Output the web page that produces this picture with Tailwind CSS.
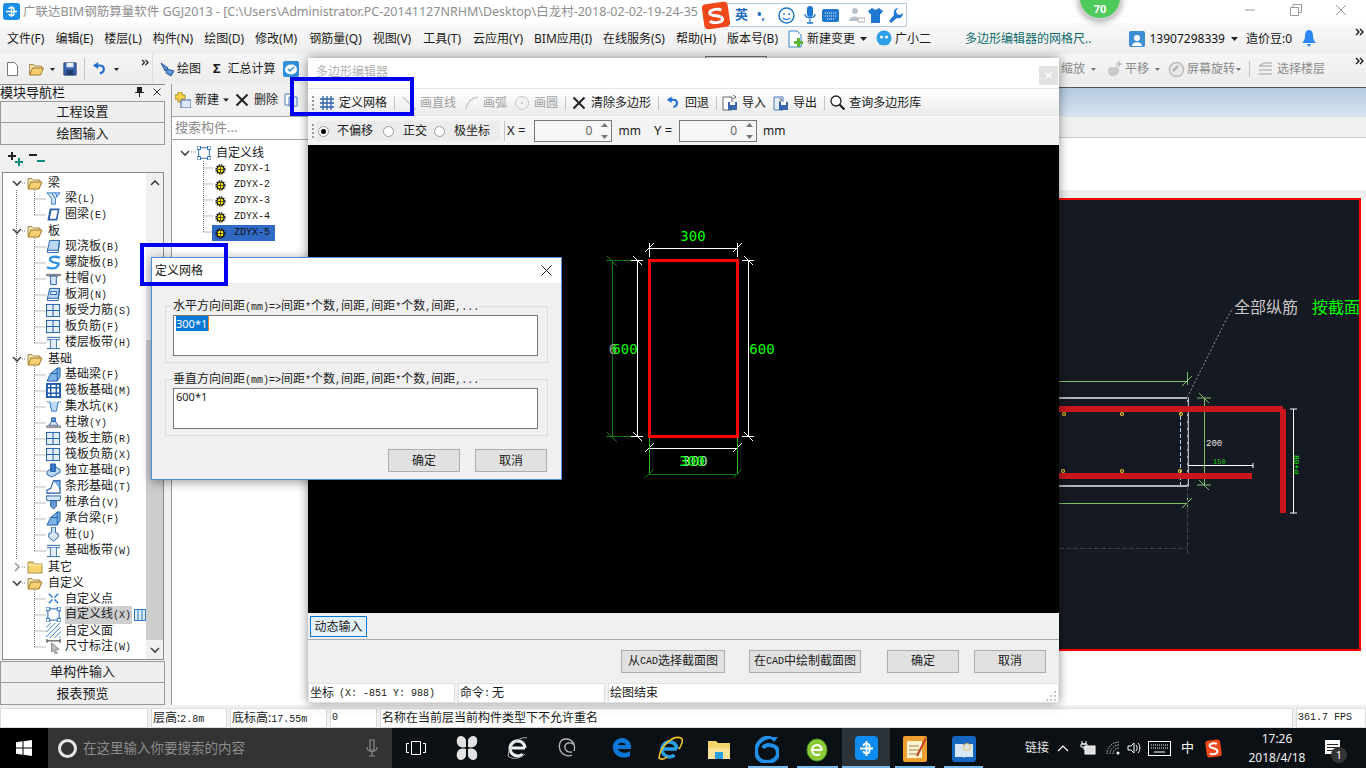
<!DOCTYPE html>
<html lang="zh">
<head>
<meta charset="UTF-8">
<title>广联达BIM钢筋算量软件 GGJ2013</title>
<script src="https://cdn.jsdelivr.net/npm/@tailwindcss/browser@4"></script>
</head>
<body class="bg-[#f0f0f0] text-[#1a1a1a] text-[12px] font-['Noto_Sans','Noto_Sans_CJK_SC',sans-serif]">

<!-- icon set -->
<svg class="absolute w-0 h-0">
  <symbol id="i-beam" viewBox="0 0 16 16"><path d="M1 2h14L10 8v6H6V8z" fill="#d7e8f8" stroke="#2a78c8"/><path d="M6 2l4 6M10 2l2 4" stroke="#2a78c8" fill="none"/></symbol>
  <symbol id="i-ring" viewBox="0 0 16 16"><path d="M4 1.500h10.500L12 14.500H1.500z" fill="#2b62ad"/><path d="M6 3.500h6.500L10.500 12.500H4z" fill="#fff"/></symbol>
  <symbol id="i-slab" viewBox="0 0 16 16"><path d="M4 1.500h10.500L13 12H1.500z" fill="#bcd8f4" stroke="#1d5aa8"/><path d="M1.500 12v2.500H13l1.500-13" fill="none" stroke="#1d5aa8"/></symbol>
  <symbol id="i-spiral" viewBox="0 0 16 16"><path d="M15 3C7 0 1 4 6 7s9 0 7 4-8 4-12 2" fill="none" stroke="#2e90e6" stroke-width="2.500"/></symbol>
  <symbol id="i-cap" viewBox="0 0 16 16"><path d="M0 3h16v2.500H0z" fill="#8a8a8a"/><path d="M4 5.500h8L11 8v6.500H5V8z" fill="#d7e8f8" stroke="#1d5aa8"/></symbol>
  <symbol id="i-hole" viewBox="0 0 16 16"><path d="M4 1.500h10.500L13 12H1.500z" fill="#bcd8f4" stroke="#1d5aa8"/><path d="M1.500 12v2.500H13l1.500-13" fill="none" stroke="#1d5aa8"/><rect x="5" y="5" width="6" height="3" fill="#fff" stroke="#1d5aa8"/></symbol>
  <symbol id="i-cross" viewBox="0 0 16 16"><rect x=".5" y="1.500" width="14" height="13" fill="#e3eefa" stroke="#1d5aa8"/><path d="M7.500 2v12M1 8h13" stroke="#1d5aa8"/></symbol>
  <symbol id="i-band" viewBox="0 0 16 16"><path d="M1 2.500h14M1 5h14M1 14.500h14" stroke="#1d5aa8"/><path d="M5 5v9M11 5v9" stroke="#1d5aa8"/><path d="M5.500 5h5v9h-5z" fill="#e3eefa"/></symbol>
  <symbol id="i-fbeam" viewBox="0 0 16 16"><path d="M1 15l4-8 7-6h3v9l-3 5z" fill="#7fb2e6" stroke="#1d5aa8"/><path d="M5 7h7v8M12 1v6" stroke="#1d5aa8" fill="none"/></symbol>
  <symbol id="i-raft" viewBox="0 0 16 16"><rect x="1" y="1" width="14" height="14" fill="#fff" stroke="#1d5aa8" stroke-width="2"/><path d="M5 1v14M11 1v14M1 5h14M1 11h14" stroke="#1d5aa8" stroke-width="1.500"/></symbol>
  <symbol id="i-pit" viewBox="0 0 16 16"><path d="M1 3h3l2 7h5l2-7h3" fill="none" stroke="#2a78c8" stroke-dasharray="2 1"/><path d="M4 3l2 10h5l2-10" fill="#bcd8f4" stroke="#2a78c8"/></symbol>
  <symbol id="i-pier" viewBox="0 0 16 16"><path d="M6 3h4v4H6z" fill="#6a9ad6" stroke="#1d5aa8"/><path d="M3 11l3-4h4l3 4z" fill="#d7e8f8" stroke="#1d5aa8"/><path d="M0 11h16v3H0z" fill="#9a9a9a"/></symbol>
  <symbol id="i-foot" viewBox="0 0 16 16"><path d="M1 9l9-5 5 3v3l-9 5-5-3z" fill="#bcd8f4" stroke="#1d5aa8"/><path d="M5 1h5v8H5z" fill="#3f78c4" stroke="#1d5aa8"/></symbol>
  <symbol id="i-strip" viewBox="0 0 16 16"><path d="M1 15v-3l4-2 3-8h5l2 9v4z" fill="#fff" stroke="#1d5aa8" stroke-width="1.200"/><path d="M8 2h5l2-1v10" fill="#7fb2e6" stroke="#1d5aa8"/></symbol>
  <symbol id="i-pilecap" viewBox="0 0 16 16"><path d="M0 1h16l-1 5H1z" fill="#d7e8f8" stroke="#1d5aa8"/><path d="M5 6h6v6l-3 3-3-3z" fill="#6a9ad6" stroke="#1d5aa8"/></symbol>
  <symbol id="i-pile" viewBox="0 0 16 16"><path d="M6 0h4v6l3 1v4l-5 4-5-4V7l3-1z" fill="#d7e8f8" stroke="#1d5aa8"/></symbol>
  <symbol id="i-point" viewBox="0 0 16 16"><path d="M3 3l10 10M13 3L3 13" stroke="#2a78c8" stroke-width="1.500"/><circle cx="8" cy="8" r="1.500" fill="#fff"/></symbol>
  <symbol id="i-line" viewBox="0 0 16 16"><rect x="2" y="2" width="12" height="12" fill="#fff" stroke="#1d5aa8"/><path d="M0 0h4v4H0zM12 0h4v4h-4zM0 12h4v4H0zM12 12h4v4h-4z" fill="#fff" stroke="#1668c8"/></symbol>
  <symbol id="i-face" viewBox="0 0 16 16"><path d="M0 5L5 0M0 10L10 0M0 15L15 0M4 16L16 4M9 16l7-7M14 16l2-2" stroke="#2a78c8"/></symbol>
  <symbol id="i-dim" viewBox="0 0 16 16"><path d="M1 0v4M15 0v4M1 2h14" stroke="#222"/><path d="M6 4l8 7-4 .5 2 4-2 .5-2-4-2 2z" fill="#bdbdbd" stroke="#888"/></symbol>
  <symbol id="i-gear" viewBox="0 0 16 16"><circle cx="8" cy="8" r="5" fill="#ffef00" stroke="#111" stroke-width="1.500"/><circle cx="8" cy="8" r="6.500" fill="none" stroke="#111" stroke-width="2" stroke-dasharray="2 1.400"/><path d="M4 8h8M8 4v8" stroke="#111"/></symbol>
  <symbol id="i-open" viewBox="0 0 16 14"><path d="M1 12V2.500h4l1.500 1.500H13v2" fill="#f3e2b0" stroke="#a88a4a"/><path d="M1 13l3-7h11l-3 7z" fill="#f5cf70" stroke="#a07a2a"/></symbol>
  <symbol id="i-closed" viewBox="0 0 16 14"><path d="M1 13V2h5l1 2h8v9z" fill="#f7d56a" stroke="#a88a4a"/><path d="M1 5h14" stroke="#fff3c0"/></symbol>
  <symbol id="i-down" viewBox="0 0 12 12"><path d="M2 4l4 4 4-4" fill="none" stroke="#444" stroke-width="1.600"/></symbol>
  <symbol id="i-right" viewBox="0 0 12 12"><path d="M4 2l4 4-4 4" fill="none" stroke="#999" stroke-width="1.600"/></symbol>
  <symbol id="i-x" viewBox="0 0 14 14"><path d="M1.500 1.500l11 11M12.500 1.500l-11 11" stroke="#222" stroke-width="2"/></symbol>
  <symbol id="i-undo" viewBox="0 0 16 16"><path d="M5 4h4c6 0 6 8 0 9" fill="none" stroke="#1f6fd0" stroke-width="2.500"/><path d="M7 0v8L1 4z" fill="#1f6fd0"/></symbol>
  <symbol id="i-floppy" viewBox="0 0 16 16"><path d="M1 1h14v14H1z" fill="#3a66b0" stroke="#223c70"/><path d="M4 1h8v5H4z" fill="#e8eef8"/><path d="M4 9h8v6H4z" fill="#223c70"/></symbol>
  <symbol id="i-arrow" viewBox="0 0 7 4"><path d="M0 0h7L3.500 4z" fill="#222"/></symbol>
  <symbol id="i-more" viewBox="0 0 9 8"><path d="M1 1l3 3-3 3M5 1l3 3-3 3" fill="none" stroke="#111" stroke-width="1.300"/></symbol>
</svg>

<div class="relative w-[1366px] h-[768px] overflow-hidden flex flex-col">

  <!-- title bar -->
  <div class="h-[23px] bg-white flex items-center shrink-0">
    <div class="ml-[3px] w-[17px] h-[17px] rounded-[3px] bg-[#1a8fe8] flex items-center justify-center">
      <svg class="w-[13px] h-[13px]" viewBox="0 0 13 13"><path d="M6.500 1v11M1 6.500h11M4 4c0-2 5-2 5 0v5c0 2-5 2-5 0" fill="none" stroke="#fff" stroke-width="1.400"/></svg>
    </div>
    <span class="ml-[3px] text-[12.500px] leading-[23px] text-[#8e8e8e] whitespace-nowrap">广联达BIM钢筋算量软件 GGJ2013 - [C:\Users\Administrator.PC-20141127NRHM\Desktop\白龙村-2018-02-02-19-24-35</span>
    <svg class="absolute left-[1244px] top-[4px] w-[12px] h-[12px]" viewBox="0 0 12 12"><path d="M1 6h10" stroke="#999"/></svg>
    <svg class="absolute left-[1290px] top-[4px] w-[12px] h-[12px]" viewBox="0 0 12 12"><path d="M.5 3.500h8v8h-8zM3 3.500V.5h8.500v8H8.500" fill="none" stroke="#999"/></svg>
    <svg class="absolute left-[1335px] top-[4px] w-[12px] h-[12px]" viewBox="0 0 12 12"><path d="M1 1l10 10M11 1L1 11" stroke="#999"/></svg>
  </div>

  <!-- menu bar -->
  <div class="h-[31px] shrink-0 bg-linear-to-b from-[#fafafa] to-[#ededed] flex items-center pl-[7px] gap-[11px] leading-[31px] whitespace-nowrap">
    <span>文件(F)</span><span>编辑(E)</span><span>楼层(L)</span><span>构件(N)</span><span>绘图(D)</span><span>修改(M)</span><span class="ml-[1px]">钢筋量(Q)</span><span>视图(V)</span><span class="ml-[1px]">工具(T)</span><span class="ml-[1px]">云应用(Y)</span><span>BIM应用(I)</span><span>在线服务(S)</span><span>帮助(H)</span><span>版本号(B)</span>
    <svg class="w-[16px] h-[18px] -ml-[2px] -mr-[7px]" viewBox="0 0 16 18"><path d="M2 1h8l4 4v12H2z" fill="#fff" stroke="#3a87c8"/><path d="M10 8h3v3h3v3h-3v3h-3v-3H7v-3h3z" fill="#5cb531"/></svg>
    <span>新建变更</span>
    <svg class="w-[7px] h-[4px] -ml-[6px]" viewBox="0 0 7 4"><use href="#i-arrow"/></svg>
    <svg class="w-[18px] h-[18px] -ml-[3px] -mr-[9px]" viewBox="0 0 18 18"><circle cx="9" cy="8" r="7.500" fill="#2b9fe8"/><circle cx="6.500" cy="7" r="1.500" fill="#fff"/><circle cx="11.500" cy="7" r="1.500" fill="#fff"/><path d="M4 15l3-3h4l3 3" fill="#2b9fe8"/></svg>
    <span>广小二</span>
    <span class="ml-[23px] text-[#0b6b6b]">多边形编辑器的网格尺..</span>
    <div class="ml-[27px] w-[16px] h-[16px] rounded-[2px] bg-[#3d8ed6] flex items-end justify-center -mr-[7px]"><svg class="w-[12px] h-[13px]" viewBox="0 0 12 13"><circle cx="6" cy="4" r="3" fill="#fff"/><path d="M1 12c0-5 10-5 10 0z" fill="#fff"/></svg></div>
    <span class="text-[#111]">13907298339</span>
    <svg class="w-[7px] h-[4px] -ml-[5px]" viewBox="0 0 7 4"><use href="#i-arrow"/></svg>
    <span class="text-[#111] -ml-[3px]">造价豆:0</span>
    <svg class="w-[14px] h-[17px] -ml-[1px]" viewBox="0 0 14 17"><path d="M7 0c3 0 4 3 4 6 0 3 1 5 3 7H0c2-2 3-4 3-7 0-3 1-6 4-6zM5 14h4l-2 3z" fill="#2a86f0"/></svg>
    <svg class="absolute left-[1355px] top-[28px] w-[9px] h-[8px]" viewBox="0 0 9 8"><use href="#i-more"/></svg>
  </div>

  <!-- main toolbar -->
  <div class="h-[30px] shrink-0 bg-linear-to-b from-[#f5f5f5] to-[#ececec] flex items-center whitespace-nowrap relative">
    <svg class="ml-[7px] w-[11px] h-[14px]" viewBox="0 0 11 14"><path d="M.5.5h7l3 3v10H.5z" fill="#fff" stroke="#777"/></svg>
    <svg class="ml-[10px] w-[17px] h-[14px]" viewBox="0 0 16 14"><use href="#i-open"/></svg>
    <svg class="ml-[5px] w-[5px] h-[3px]" viewBox="0 0 7 4"><use href="#i-arrow"/></svg>
    <svg class="ml-[8px] w-[14px] h-[14px]" viewBox="0 0 16 16"><use href="#i-floppy"/></svg>
    <div class="ml-[7px] w-[1px] h-[22px] bg-[#c4c4c4]"></div>
    <svg class="ml-[7px] w-[14px] h-[14px]" viewBox="0 0 16 16"><use href="#i-undo"/></svg>
    <svg class="ml-[8px] w-[5px] h-[3px]" viewBox="0 0 7 4"><use href="#i-arrow"/></svg>
    <svg class="ml-[22px] -mt-[14px] w-[8px] h-[7px]" viewBox="0 0 9 8"><use href="#i-more"/></svg>
    <div class="ml-[3px] w-[1px] h-[30px] bg-[#dedede]"></div>
    <svg class="ml-[6px] w-[17px] h-[17px]" viewBox="0 0 17 17"><path d="M2 2l7 5-3 3zM8 8l7 2-3 5-5-3z" fill="#5b94d6" stroke="#2c5c9c"/></svg>
    <span class="ml-[1px]">绘图</span>
    <span class="ml-[12px] font-bold text-[13px]">Σ</span>
    <span class="ml-[7px]">汇总计算</span>
    <svg class="ml-[7px] w-[16px] h-[16px]" viewBox="0 0 16 16"><rect width="16" height="16" rx="2" fill="#2f8fd8"/><ellipse cx="8" cy="8.500" rx="6" ry="5" fill="#fff"/><path d="M5 8l2 2 4-4" fill="none" stroke="#2f8fd8" stroke-width="1.500"/></svg>
    <div class="absolute left-[705px] top-[2px] w-[62px] h-[4px] border border-[#777] border-b-0"></div>
    <div class="absolute left-[1061px] top-0 h-[30px] flex items-center text-[#8a8a8a]">
      <span>缩放</span>
      <svg class="ml-[6px] w-[5px] h-[3px] opacity-60" viewBox="0 0 7 4"><use href="#i-arrow"/></svg>
      <svg class="ml-[10px] w-[16px] h-[16px]" viewBox="0 0 16 16"><path d="M2 10c0-4 4-5 6-3l2-2 3 3c1 4-2 7-6 7-3 0-5-2-5-5z" fill="#c9c9c9"/><path d="M13 0v6M10 3h6" stroke="#aaa"/></svg>
      <span class="ml-[3px]">平移</span>
      <svg class="ml-[6px] w-[5px] h-[3px] opacity-60" viewBox="0 0 7 4"><use href="#i-arrow"/></svg>
      <svg class="ml-[8px] w-[17px] h-[17px]" viewBox="0 0 17 17"><circle cx="8.500" cy="8.500" r="7" fill="#e8e8e8" stroke="#bbb" stroke-width="1.500"/><path d="M5 10l5-5" stroke="#aaa" stroke-width="2"/></svg>
      <span class="ml-[2px]">屏幕旋转</span>
      <svg class="ml-[1px] w-[5px] h-[3px] opacity-60" viewBox="0 0 7 4"><use href="#i-arrow"/></svg>
      <div class="ml-[8px] w-[1px] h-[16px] bg-[#c4c4c4]"></div>
      <svg class="ml-[8px] w-[15px] h-[14px]" viewBox="0 0 15 14"><path d="M1 4l5-3h8M1 4h13M1 8h13M1 12h13" fill="none" stroke="#bbb" stroke-width="1.500"/></svg>
      <span class="ml-[4px]">选择楼层</span>
    </div>
    <svg class="absolute left-[1355px] top-[3px] w-[9px] h-[8px]" viewBox="0 0 9 8"><use href="#i-more"/></svg>
  </div>

  <!-- work area -->
  <div class="h-[621px] shrink-0 flex">
    <!-- module nav -->
    <div class="w-[165px] shrink-0 flex flex-col">
      <div class="h-[14px] border-t border-[#8a8a8a] flex items-center">
        <span class="text-[13px] leading-[14px] text-[#111]">模块导航栏</span>
        <svg class="ml-auto w-[9px] h-[10px]" viewBox="0 0 9 10"><path d="M2 0h5v5h2v1H5v4H4V6H0V5h2z" fill="#222"/></svg>
        <svg class="ml-[9px] mr-[4px] w-[8px] h-[8px]" viewBox="0 0 8 8"><path d="M.5.5l7 7M7.500.5l-7 7" stroke="#333"/></svg>
      </div>
      <div class="mt-[3px] h-[22px] border border-[#9a9a9a] bg-[#efefef] flex items-center justify-center text-[13px]">工程设置</div>
      <div class="h-[22px] border border-t-0 border-[#9a9a9a] bg-[#efefef] flex items-center justify-center text-[13px]">绘图输入</div>
      <div class="h-[27px] flex items-center pl-[7px]">
        <svg class="w-[17px] h-[15px]" viewBox="0 0 17 15"><path d="M1 5h8M5 1v8" stroke="#222" stroke-width="2"/><path d="M8 11h8M12 7v8" stroke="#0c8a78" stroke-width="2"/></svg>
        <svg class="ml-[5px] w-[17px] h-[10px]" viewBox="0 0 17 10"><path d="M0 2h8" stroke="#222" stroke-width="2"/><path d="M8 8h8" stroke="#0c8a78" stroke-width="2"/></svg>
      </div>
      <div class="relative ml-[2px] w-[162px] h-[489px] border border-[#8a8a8a] bg-white overflow-hidden">
        <svg class="absolute left-0 top-[1px] w-[144px] h-[487px]" viewBox="0 0 144 487" fill="none" stroke="#777" stroke-dasharray="1 1">
          <path d="M13.500 16V385M19 9h4M19 57h4M19 185h4M19 393h4M19 409h4"/>
          <path d="M31.500 16V41M31.500 64V169M31.500 192V377M31.500 416V473"/>
          <path d="M31.500 25H43M31.500 41H43M31.500 73H43M31.500 89H43M31.500 105H43M31.500 121H43M31.500 137H43M31.500 153H43M31.500 169H43M31.500 201H43M31.500 217H43M31.500 233H43M31.500 249H43M31.500 265H43M31.500 281H43M31.500 297H43M31.500 313H43M31.500 329H43M31.500 345H43M31.500 361H43M31.500 377H43M31.500 425H43M31.500 441H43M31.500 457H43M31.500 473H43"/>
        </svg>
        <div id="nav-tree" class="relative pt-[2px] w-[143px]"></div>
        <div class="absolute right-0 top-0 w-[17px] h-full bg-[#f0f0f0] flex flex-col items-center">
          <svg class="mt-[4px] w-[12px] h-[12px] rotate-180" viewBox="0 0 12 12"><use href="#i-down"/></svg>
          <div class="mt-[151px] w-full h-[300px] bg-[#cdcdcd]"></div>
          <svg class="mt-[4px] w-[12px] h-[12px]" viewBox="0 0 12 12"><use href="#i-down"/></svg>
        </div>
      </div>
      <div class="mt-[1px] h-[22px] border border-[#9a9a9a] bg-[#efefef] flex items-center justify-center text-[13px]">单构件输入</div>
      <div class="h-[22px] border border-t-0 border-[#9a9a9a] bg-[#efefef] flex items-center justify-center text-[13px]">报表预览</div>
    </div>

    <div class="w-[6px] shrink-0"></div>

    <!-- component list -->
    <div class="w-[140px] shrink-0 flex flex-col border-l border-[#999]">
      <div class="h-[32px] flex items-center pl-[3px] whitespace-nowrap overflow-hidden">
        <svg class="w-[16px] h-[16px]" viewBox="0 0 16 16"><path d="M3 0h4v3h3v4H7v3H3V7H0V3h3z" fill="#f5d44a" stroke="#a88a2a"/><rect x="6" y="8" width="10" height="8" fill="#dce8f6" stroke="#3a66b0"/></svg>
        <span class="ml-[4px]">新建</span>
        <svg class="ml-[4px] w-[6px] h-[4px]" viewBox="0 0 7 4"><use href="#i-arrow"/></svg>
        <svg class="ml-[6px] w-[14px] h-[14px]" viewBox="0 0 14 14"><use href="#i-x"/></svg>
        <span class="ml-[5px]">删除</span>
        <svg class="ml-[6px] w-[14px] h-[14px] shrink-0" viewBox="0 0 14 14"><path d="M1 1h8v11H1z" fill="#fff" stroke="#4a78b8"/><path d="M5 4h8v9H5z" fill="#e3eefa" stroke="#4a78b8"/></svg>
      </div>
      <div class="h-[24px] bg-white border-y border-[#a8a8a8] flex items-center pl-[3px] text-[13px] text-[#8a8a8a]">搜索构件...</div>
      <div class="relative flex-1 bg-white pt-[4px]">
        <svg class="absolute left-0 top-[1px] w-[60px] h-[100px]" viewBox="0 0 60 100" fill="none" stroke="#777" stroke-dasharray="1 1">
          <path d="M31.500 20V91M19 11h5M31.500 27H41M31.500 43H41M31.500 59H41M31.500 75H41M31.500 91H41"/>
        </svg>
        <div id="part-tree" class="relative pt-[1px]"></div>
      </div>
    </div>

    <!-- drawing view behind the editor -->
    <div class="flex-1 flex flex-col min-w-0">
      <div class="h-[3px] bg-[#f0f0f0]"></div>
      <div class="h-[30px] border-t border-[#555] bg-linear-to-b from-[#b5c9df] to-[#d8e5f2]"></div>
      <div class="h-[20px] bg-[#f0f0f0]"></div>
      <div class="h-[53px] bg-white border-t border-[#c8c8c8]"></div>
      <div class="h-[8px] bg-[#eeeeee]"></div>
      <svg class="block w-[1055px] h-[453px] shrink-0" viewBox="311 198 1055 453">
        <rect x="311" y="198" width="1055" height="453" fill="#fff"/>
        <rect x="311" y="199" width="1049" height="451" fill="#151921" stroke="#ff0000" stroke-width="2"/>
        <path d="M1059 381.500H1187M1059 503.500H1187M1204.500 398V485M1197 398h14M1197 485h14" stroke="#7fbf6a"/>
        <path d="M1182 386l10-10M1182 508l10-10M1199 393l10 10M1199 480l10 10" stroke="#7fbf6a"/>
        <path d="M1187.500 372v13M1187.500 494v13" stroke="#7fbf6a"/>
        <path d="M1059 398h129v88h-129" fill="none" stroke="#e8e8e8" stroke-width="1.500"/>
        <path d="M1187.500 395v161M1059 548.500h128" stroke="#3a4250" stroke-dasharray="5 2"/>
        <path d="M1180.500 410v75" stroke="#a8d0f0" stroke-dasharray="4 2"/>
        <path d="M1059 406h224v3h3v104h-6V412H1059zM1059 473h193v6H1059z" fill="#c8181e"/>
        <g fill="none" stroke="#e8c020" stroke-width="1.200"><circle cx="1064" cy="414" r="1.500"/><circle cx="1122" cy="414" r="1.500"/><circle cx="1181" cy="414" r="1.500"/><circle cx="1063" cy="471" r="1.500"/><circle cx="1122" cy="471" r="1.500"/><circle cx="1180" cy="471" r="1.500"/></g>
        <path d="M1188 465.500h65M1253 463v5" stroke="#fff"/>
        <path d="M1293.500 409v104M1290 409h7M1290 513h7" stroke="#fff"/>
        <path d="M1189 394l38-76 6-10" stroke="#9a9a9a" stroke-dasharray="2 2" fill="none"/>
        <text x="1206" y="446" font-size="9" fill="#e8e8e8" font-family="Liberation Mono">200</text>
        <text x="1213" y="464" font-size="7" fill="#18c018" font-family="Liberation Mono">150</text>
        <text x="1294" y="455" font-size="8" fill="#00ff00" font-family="Liberation Mono" transform="rotate(90 1294 455)">80+d</text>
        <text x="1234" y="313" font-size="16" fill="#c8c8c8" font-family="Noto Sans CJK SC">全部纵筋</text>
        <text x="1312" y="313" font-size="16" fill="#00ff00" font-family="Noto Sans CJK SC">按截面</text>
        <rect x="1359" y="198" width="2" height="453" fill="#ff0000"/>
        <rect x="1361" y="198" width="5" height="453" fill="#fff"/>
      </svg>
      <div class="flex-1 bg-white"></div>
    </div>
  </div>

  <!-- status bar -->
  <div class="mt-[3px] h-[20px] shrink-0 flex gap-[3px] text-[12px] leading-[18px] whitespace-nowrap bg-[#f0f0f0]">
    <div class="w-[148px] bg-white border border-[#dcdcdc]"></div>
    <div class="w-[76px] bg-white border border-[#dcdcdc] pl-[1px]">层高:<span class="font-mono text-[10px]">2.8m</span></div>
    <div class="w-[97px] bg-white border border-[#dcdcdc] pl-[1px]">底标高:<span class="font-mono text-[10px]">17.55m</span></div>
    <div class="w-[47px] bg-white border border-[#dcdcdc] pl-[1px] font-mono text-[10px]">0</div>
    <div class="w-[913px] bg-white border border-[#dcdcdc] pl-[1px]">名称在当前层当前构件类型下不允许重名</div>
    <div class="flex-1 bg-white border border-[#dcdcdc] pl-[1px] font-mono text-[10px]">361.7 FPS</div>
  </div>

  <!-- taskbar -->
  <div class="h-[40px] shrink-0 bg-[#0a1014] flex items-center relative whitespace-nowrap">
    <div class="w-[48px] h-full bg-black flex items-center justify-center">
      <svg class="w-[16px] h-[16px]" viewBox="0 0 16 16"><path d="M0 2.200l6.500-.9v6.200H0zM7.500 1.200L16 0v7.500H7.500zM0 8.500h6.500v6.200L0 13.800zM7.500 8.500H16V16l-8.500-1.200z" fill="#fff"/></svg>
    </div>
    <div class="w-[344px] h-full bg-[#333] flex items-center">
      <div class="ml-[10px] w-[19px] h-[19px] rounded-full border-[3px] border-[#e6e6e6]"></div>
      <span class="ml-[6px] text-[13.500px] text-[#8c8c8c]">在这里输入你要搜索的内容</span>
      <svg class="ml-auto mr-[14px] w-[12px] h-[18px]" viewBox="0 0 12 18"><path d="M4 1h4v10H4zM1 8c0 6 10 6 10 0M6 13v4M3 17h6" fill="none" stroke="#8c8c8c" stroke-width="1.200"/></svg>
    </div>
    <div class="flex items-center h-full">
      <svg class="ml-[14px] w-[20px] h-[16px]" viewBox="0 0 20 16"><path d="M5.500 1.500h9v13h-9zM3 3.500H.5v9H3M17 3.500h2.500v9H17" fill="none" stroke="#fff"/></svg>
      <svg class="ml-[30px] w-[22px] h-[26px]" viewBox="0 0 22 26"><path d="M10 12C2 14 0 8 1 4s7-4 9 1zM12 12C20 14 22 8 21 4s-7-4-9 1zM10 14C2 12 0 18 1 22s7 4 9-1zM12 14c8-2 10 4 9 8s-7 4-9-1z" fill="#e3e3e3"/></svg>
      <svg class="ml-[28px] w-[24px] h-[26px]" viewBox="0 0 24 26"><path d="M4 13h15M19 13a7.500 7.500 0 1 0-2.500 6" fill="none" stroke="#f0f0f0" stroke-width="3"/><path d="M21 3C14 1 3 10 2 21c6 5 14 1 17-2" fill="none" stroke="#bbb"/></svg>
      <svg class="ml-[27px] w-[21px] h-[22px]" viewBox="0 0 21 22"><path d="M17 14c2-7-2-12-8-12S1 8 3 13c2 5 8 7 12 5M17 8c-2-3-8-3-9 1s3 7 7 6" fill="none" stroke="#b8b8b8" stroke-width="1.300"/></svg>
      <svg class="ml-[33px] w-[24px] h-[24px]" viewBox="0 0 24 24"><path d="M4 13h16c1-6-3-11-9-11S1 7 2 13c1 7 10 11 17 7v-5c-4 3-11 2-12-2zM7 9c1-3 7-3 8 0z" fill="#0b78d8" fill-rule="evenodd"/></svg>
      <svg class="ml-[22px] w-[26px] h-[26px]" viewBox="0 0 26 26"><path d="M6 14h14M20 14a7.500 7.500 0 1 0-2.500 6" fill="none" stroke="#2a9fe8" stroke-width="3.500"/><path d="M24 3C16 0 3 11 2 23c4 3 6 0 8-1M24 3c3 2 0 8-2 11" fill="none" stroke="#f4c020" stroke-width="1.600"/></svg>
    </div>
    <svg class="absolute left-[708px] top-[12px] w-[22px] h-[19px]" viewBox="0 0 22 19"><path d="M0 1h8l2 2h12v16H0z" fill="#f7d56a"/><path d="M0 8h22v11H0z" fill="#fbe39a"/><path d="M7 12h8v7H7z" fill="#2a9fe8"/></svg>
    <svg class="absolute left-[755px] top-[8px] w-[24px] h-[27px]" viewBox="0 0 24 27"><path d="M16 1c-8 0-15 6-15 14 0 7 5 11 11 11s11-4 11-9-4-8-9-8c-3 0-5 1-6 3" fill="none" stroke="#1f8fe8" stroke-width="4"/><path d="M14 1h9l-4 5z" fill="#1f8fe8"/></svg>
    <svg class="absolute left-[805px] top-[7px] w-[24px] h-[28px]" viewBox="0 0 24 28"><ellipse cx="12" cy="15" rx="10" ry="11" fill="#8ecb3a" stroke="#4a9a20"/><path d="M7 15h10M17 15a5 5 0 1 0-2 4" fill="none" stroke="#fff" stroke-width="2"/></svg>
    <div class="absolute left-[842px] top-0 w-[48px] h-full bg-[#2b3339] flex items-center justify-center">
      <div class="w-[23px] h-[24px] rounded-[4px] bg-[#0f8cf0] flex items-center justify-center"><svg class="w-[17px] h-[17px]" viewBox="0 0 17 17"><path d="M8.500 1v15M2 8.500h13M5.500 6c0-3 6-3 6 0v5c0 3-6 3-6 0" fill="none" stroke="#fff" stroke-width="1.800"/></svg></div>
    </div>
    <svg class="absolute left-[903px] top-[8px] w-[24px] h-[26px]" viewBox="0 0 24 26"><rect width="24" height="26" rx="2" fill="#f0a030"/><rect x="4" y="5" width="15" height="17" fill="#fdf3d0"/><path d="M6 10h10M6 14h10M6 18h8" stroke="#a08050"/><path d="M23 2L14 20" stroke="#c04020" stroke-width="2"/></svg>
    <svg class="absolute left-[952px] top-[8px] w-[24px] h-[26px]" viewBox="0 0 24 26"><rect width="24" height="26" rx="3" fill="#1566c0"/><path d="M3 8h8l1 2 1-2h8v13h-8l-1 1-1-1H3z" fill="#d8e8f8"/><circle cx="15" cy="11" r="3.500" fill="none" stroke="#f0c040"/></svg>
    <div class="absolute left-[748px] bottom-0 w-[40px] h-[2px] bg-[#76b9ed]"></div>
    <div class="absolute left-[797px] bottom-0 w-[41px] h-[2px] bg-[#76b9ed]"></div>
    <div class="absolute left-[842px] bottom-0 w-[48px] h-[2px] bg-[#76b9ed]"></div>
    <div class="absolute left-[895px] bottom-0 w-[40px] h-[2px] bg-[#76b9ed]"></div>
    <div class="absolute left-[944px] bottom-0 w-[39px] h-[2px] bg-[#76b9ed]"></div>

    <div class="absolute left-[1025px] top-0 h-full flex items-center text-[#e6e6e6]">
      <span>链接</span>
      <svg class="ml-[8px] w-[12px] h-[8px]" viewBox="0 0 12 8"><path d="M1 7l5-5 5 5" fill="none" stroke="#fff" stroke-width="1.200"/></svg>
      <svg class="ml-[11px] w-[16px] h-[14px]" viewBox="0 0 16 14"><path d="M2 0v3h4V0M1 3h6v3H1zM4 6v3" stroke="#fff" fill="none"/><rect x="5" y="5" width="10" height="8" fill="#ddd" stroke="#fff"/></svg>
      <svg class="ml-[10px] w-[14px] h-[14px]" viewBox="0 0 14 14"><path d="M1 13a12 12 0 0 1 12-12M4 13a9 9 0 0 1 9-9M7 13a6 6 0 0 1 6-6" fill="none" stroke="#ccc" stroke-dasharray="1.500 1"/><circle cx="12" cy="12" r="1.500" fill="#fff"/></svg>
      <svg class="ml-[7px] w-[14px] h-[14px]" viewBox="0 0 14 14"><path d="M1 5h3l3-3v10L4 9H1zM9 4c1.500 2 1.500 4 0 6M11 2c2.500 3 2.500 7 0 10" fill="none" stroke="#fff"/></svg>
      <svg class="ml-[7px] w-[23px] h-[15px]" viewBox="0 0 23 15"><rect x=".5" y=".5" width="22" height="14" fill="none" stroke="#fff"/><path d="M3 4h17M3 7h17" stroke="#fff" stroke-dasharray="1 1"/><path d="M6 11h11" stroke="#fff"/></svg>
      <span class="ml-[10px] text-[13px] text-white">中</span>
      <div class="ml-[12px] w-[15px] h-[17px] rounded-[3px] bg-[#f0481a] rotate-[-8deg] flex items-center justify-center"><svg class="w-[11px] h-[13px]" viewBox="0 0 11 13"><path d="M9.500 2.500C7 .5 2 1 2 3.500s7 2.500 7 6-5 3-8 1.500" fill="none" stroke="#fff" stroke-width="2"/></svg></div>
    </div>
    <div class="absolute left-[1241px] top-0 w-[72px] h-full flex flex-col items-center text-[12px] leading-[19px] text-[#f0f0f0] pt-[1px]"><span>17:26</span><span>2018/4/18</span></div>
    <div class="absolute left-[1325px] top-[12px] w-[15px] h-[14px] bg-white flex flex-col justify-center gap-[2px] px-[2px]"><div class="h-[1px] bg-[#222]"></div><div class="h-[1px] bg-[#222]"></div><div class="h-[1px] bg-[#222]"></div></div>
    <div class="absolute left-[1331px] top-[19px] w-[16px] h-[16px] rounded-full bg-[#333] text-white text-[11px] leading-[16px] text-center">1</div>
  </div>

  <!-- Sogou input bar -->
  <div class="absolute left-[722px] top-[3px] w-[185px] h-[24px] bg-white border border-[#b7cbe0] flex items-center pl-[12px] text-[#1f6fc4]">
    <span class="text-[13px] font-bold">英</span>
    <span class="ml-[9px] text-[12px] font-bold leading-[12px]">•,</span>
    <svg class="ml-[13px] w-[17px] h-[17px]" viewBox="0 0 17 17"><circle cx="8.500" cy="8.500" r="7.500" fill="none" stroke="#1f78d0" stroke-width="1.500"/><path d="M6 6v2M11 6v2M5 11c2 2 5 2 7 0" fill="none" stroke="#1f78d0" stroke-width="1.300"/></svg>
    <svg class="ml-[9px] w-[12px] h-[18px]" viewBox="0 0 12 18"><rect x="3" y="0" width="6" height="11" rx="3" fill="#1f78d0"/><path d="M1 8c0 5 10 5 10 0M6 13v4M3 17h6" fill="none" stroke="#1f78d0" stroke-width="1.300"/></svg>
    <svg class="ml-[6px] w-[17px] h-[13px]" viewBox="0 0 17 13"><rect width="17" height="13" rx="2" fill="#1f78d0"/><path d="M3 4h11M3 7h11M5 10h7" stroke="#fff" stroke-dasharray="1 1"/></svg>
    <svg class="ml-[10px] w-[16px] h-[16px]" viewBox="0 0 16 16"><circle cx="6" cy="4" r="3" fill="#b8c4d0"/><path d="M0 14c0-6 11-6 11 0z" fill="#b8c4d0"/><path d="M9 11h7v4H9z" fill="#fff" stroke="#aaa"/></svg>
    <svg class="ml-[3px] w-[15px] h-[15px]" viewBox="0 0 15 15"><path d="M4 0l3.500 2L11 0l4 3-2 3h-1v9H3V6H2L0 3z" fill="#1f78d0"/></svg>
    <svg class="ml-[5px] w-[15px] h-[15px]" viewBox="0 0 15 15"><path d="M10 0l-2 3 1 3 3 1 3-2c0 4-3 6-6 5l-6 5-2-2 5-6C5 3 7 0 10 0z" fill="#1f78d0"/></svg>
  </div>
  <div class="absolute left-[703px] top-[3px] w-[26px] h-[25px] rounded-[4px] bg-[#f0481a] rotate-[-8deg] flex items-center justify-center">
    <svg class="w-[18px] h-[16px]" viewBox="0 0 18 16"><path d="M15 3C11 0 3 1 3 4.500s12 3 12 7-9 4-13 1" fill="none" stroke="#fff" stroke-width="3"/></svg>
  </div>

  <!-- score ball -->
  <div class="absolute left-[1078px] -top-[24px] w-[44px] h-[44px] rounded-full bg-[#4fcb5c] border-[2px] border-[#d0d0d0] shadow-[0_2px_6px_rgba(0,0,0,.35)] flex items-end justify-center">
    <span class="text-[11px] leading-[15px] font-bold text-white mb-[2px]">70</span>
  </div>

  <!-- polygon editor -->
  <div class="absolute left-[308px] top-[58px] w-[751px] h-[645px] bg-[#f0f0f0] flex flex-col shadow-[0_0_10px_rgba(0,0,0,.45)] whitespace-nowrap">
    <div class="h-[31px] bg-white flex items-center pl-[8px] border-b border-[#e4e4e4] relative">
      <span class="text-[#b0b0b0] mt-[-3px]">多边形编辑器</span>
      <div class="absolute left-[731px] top-[8px] w-[19px] h-[19px] bg-[#e2e2e2] flex items-center justify-center">
        <svg class="w-[7px] h-[7px]" viewBox="0 0 7 7"><path d="M.5.5l6 6M6.500.5l-6 6" stroke="#fff" stroke-width="1.300"/></svg>
      </div>
    </div>
    <div class="h-[27px] bg-linear-to-b from-white to-[#eaeaea] flex items-center pl-[4px]">
      <div class="w-[2px] h-[14px] border-l-2 border-dotted border-[#999]"></div>
      <svg class="ml-[6px] w-[14px] h-[14px]" viewBox="0 0 14 14"><path d="M3 0v14M7 0v14M11 0v14M0 3h14M0 7h14M0 11h14" stroke="#2b62ad" stroke-width="1.300"/></svg>
      <span class="ml-[5px]">定义网格</span>
      <div class="ml-[7px] w-[1px] h-[14px] bg-[#c4c4c4]"></div>
      <svg class="ml-[7px] w-[14px] h-[14px]" viewBox="0 0 14 14"><path d="M1 1l12 12" stroke="#c8c8c8" stroke-width="1.500"/><path d="M10 13h4" stroke="#bbb"/></svg>
      <span class="ml-[4px] text-[#a0a0a0]">画直线</span>
      <svg class="ml-[9px] w-[14px] h-[14px]" viewBox="0 0 14 14"><path d="M1 13C2 6 6 2 13 1" fill="none" stroke="#c8c8c8" stroke-width="1.500"/></svg>
      <span class="ml-[4px] text-[#a0a0a0]">画弧</span>
      <svg class="ml-[8px] w-[14px] h-[14px]" viewBox="0 0 14 14"><circle cx="7" cy="7" r="6.500" fill="#f2f2f2" stroke="#c8c8c8"/><circle cx="7" cy="7" r="1" fill="#bbb"/></svg>
      <span class="ml-[5px] text-[#a0a0a0]">画圆</span>
      <div class="ml-[7px] w-[1px] h-[14px] bg-[#c4c4c4]"></div>
      <svg class="ml-[6px] w-[14px] h-[14px]" viewBox="0 0 14 14"><use href="#i-x"/></svg>
      <span class="ml-[5px]">清除多边形</span>
      <div class="ml-[7px] w-[1px] h-[14px] bg-[#c4c4c4]"></div>
      <svg class="ml-[7px] w-[13px] h-[14px]" viewBox="0 0 16 16"><use href="#i-undo"/></svg>
      <span class="ml-[6px]">回退</span>
      <div class="ml-[7px] w-[1px] h-[14px] bg-[#c4c4c4]"></div>
      <svg class="ml-[5px] w-[16px] h-[16px]" viewBox="0 0 16 16"><path d="M1 2h9v13H1z" fill="#fff" stroke="#666"/><path d="M6 7h9v8H6z" fill="#3a66b0"/><path d="M8 7h5v3H8z" fill="#fff"/><path d="M11 0l3 2-3 2" fill="none" stroke="#666"/></svg>
      <span class="ml-[4px]">导入</span>
      <svg class="ml-[7px] w-[16px] h-[16px]" viewBox="0 0 16 16"><path d="M1 2h9v13H1z" fill="#e3eefa" stroke="#4a78b8"/><path d="M6 7h9v8H6z" fill="#3a66b0"/><path d="M8 7h5v3H8z" fill="#fff"/><path d="M6 3l3 2-3 2" fill="none" stroke="#666"/></svg>
      <span class="ml-[4px]">导出</span>
      <div class="ml-[7px] w-[1px] h-[14px] bg-[#c4c4c4]"></div>
      <svg class="ml-[5px] w-[15px] h-[15px]" viewBox="0 0 15 15"><circle cx="6" cy="6" r="5" fill="#fff" stroke="#222" stroke-width="1.300"/><path d="M9.500 9.500l5 5" stroke="#222" stroke-width="2.200"/></svg>
      <span class="ml-[4px]">查询多边形库</span>
    </div>
    <div class="h-[29px] bg-[#f3f3f3] flex items-center pl-[4px] border-t border-[#f8f8f8]">
      <div class="w-[2px] h-[14px] border-l-2 border-dotted border-[#999]"></div>
      <div class="ml-[2px] w-[184px] h-[20px] bg-[#ececec] flex items-center pl-[2px]">
        <div class="w-[11px] h-[11px] rounded-full border border-[#999] bg-white flex items-center justify-center"><div class="w-[5px] h-[5px] rounded-full bg-black"></div></div>
        <span class="ml-[8px]">不偏移</span>
        <div class="ml-[10px] w-[11px] h-[11px] rounded-full border border-[#999] bg-white"></div>
        <span class="ml-[9px]">正交</span>
        <div class="ml-[7px] w-[11px] h-[11px] rounded-full border border-[#999] bg-white"></div>
        <span class="ml-[9px]">极坐标</span>
      </div>
      <div class="ml-[4px] w-[1px] h-[20px] bg-[#c4c4c4]"></div>
      <span class="ml-[2px] text-[13px]">X =</span>
      <div class="ml-[9px] w-[78px] h-[22px] bg-[#f7f7f7] border border-[#777] flex items-center justify-end pr-[19px] text-[#666] text-[12px] relative">0
        <svg class="absolute right-[3px] top-[2px] w-[7px] h-[16px]" viewBox="0 0 7 16"><path d="M0 4l3.500-4L7 4zM0 12l3.500 4L7 12z" fill="#777"/></svg>
      </div>
      <span class="ml-[6px] text-[12px]">mm</span>
      <span class="ml-[13px] text-[13px]">Y =</span>
      <div class="ml-[7px] w-[78px] h-[22px] bg-[#f7f7f7] border border-[#777] flex items-center justify-end pr-[19px] text-[#666] text-[12px] relative">0
        <svg class="absolute right-[3px] top-[2px] w-[7px] h-[16px]" viewBox="0 0 7 16"><path d="M0 4l3.500-4L7 4zM0 12l3.500 4L7 12z" fill="#777"/></svg>
      </div>
      <span class="ml-[6px] text-[12px]">mm</span>
    </div>

    <!-- canvas -->
    <div class="h-[468px] bg-black shrink-0">
      <svg class="block w-[751px] h-[468px]" viewBox="308 145 751 468">
        <path d="M606 260.500h25M606 436.500h25M612.500 260v177" stroke="#0e7a0e"/>
        <path d="M607 256l10 10M607 432l10 10" stroke="#0e7a0e"/>
        <path d="M631 260.500h12M631 436.500h12M637.500 260v177" stroke="#fff"/>
        <path d="M633 256l9 9M633 432l9 9M744 256l9 9M744 432l9 9" stroke="#fff"/>
        <path d="M742 260.500h12M742 436.500h12M748.500 260v177" stroke="#fff"/>
        <path d="M649 248.500h88M649.500 243v14M737.500 243v14M649 448.500h88" stroke="#fff"/>
        <path d="M645 252l9-9M733 252l9-9M645 452l9-9M733 452l9-9" stroke="#fff"/>
        <path d="M649.500 438v35M737.500 438v35" stroke="#2fb02f"/>
        <path d="M649 474.500h89" stroke="#0e7a0e"/>
        <path d="M645 478l9-9M733 478l9-9" stroke="#0e7a0e"/>
        <rect x="649.500" y="260.500" width="88" height="176" fill="none" stroke="#ff0000" stroke-width="3"/>
        <g font-family="DejaVu Sans Mono" font-size="14" text-anchor="middle" fill="#00ff00">
          <text x="693" y="241">300</text>
          <text x="762" y="354">600</text>
          <text x="613" y="354" fill="#999">6</text>
          <text x="625" y="354">600</text>
          <text x="695" y="466" fill="#9fe89f">300</text>
          <text x="692" y="466">300</text>
        </g>
      </svg>
    </div>

    <div class="h-[27px] border-b border-[#aaa] flex items-center pl-[2px]">
      <div class="w-[57px] h-[21px] mt-[1px] border border-[#0078d7] bg-[#e5f1fb] flex items-center justify-center">动态输入</div>
    </div>
    <div class="h-[42px] flex items-center">
      <div class="ml-[313px] w-[104px] h-[23px] border border-[#adadad] bg-[#e1e1e1] flex items-center justify-center">从<span class="font-mono text-[10px]">CAD</span>选择截面图</div>
      <div class="ml-[24px] w-[112px] h-[23px] border border-[#adadad] bg-[#e1e1e1] flex items-center justify-center">在<span class="font-mono text-[10px]">CAD</span>中绘制截面图</div>
      <div class="ml-[26px] w-[72px] h-[23px] border border-[#adadad] bg-[#e1e1e1] flex items-center justify-center">确定</div>
      <div class="ml-[15px] w-[72px] h-[23px] border border-[#adadad] bg-[#e1e1e1] flex items-center justify-center">取消</div>
    </div>
    <div class="flex-1 flex gap-[3px] bg-[#f0f0f0] pt-[1px]">
      <div class="w-[147px] bg-white border border-[#e0e0e0] flex items-center pl-[1px]">坐标<span class="ml-[5px] font-mono text-[10px]">(X: -851 Y: 988)</span></div>
      <div class="w-[147px] bg-white border border-[#e0e0e0] flex items-center pl-[1px]">命令<span class="font-mono text-[10px]">:</span><span class="ml-[2px]">无</span></div>
      <div class="flex-1 bg-white border border-[#e0e0e0] flex items-center pl-[1px] relative">绘图结束
        <svg class="absolute right-[1px] bottom-[1px] w-[11px] h-[11px]" viewBox="0 0 11 11"><path d="M8 1h2v2H8zM4 5h2v2H4zM8 5h2v2H8zM0 9h2v2H0zM4 9h2v2H4zM8 9h2v2H8z" fill="#c8c8c8"/></svg>
      </div>
    </div>
  </div>

  <!-- grid dialog -->
  <div class="absolute left-[151px] top-[257px] w-[411px] h-[223px] bg-[#f0f0f0] border border-[#4a90d9] shadow-[0_2px_10px_rgba(0,0,0,.4)] flex flex-col whitespace-nowrap">
    <div class="h-[25px] bg-white flex items-center pl-[3px] shrink-0">
      <span class="text-[12px]">定义网格</span>
      <svg class="ml-auto mr-[9px] w-[11px] h-[11px]" viewBox="0 0 11 11"><path d="M.5.5l10 10M10.500.5l-10 10" stroke="#222"/></svg>
    </div>
    <fieldset class="mt-[14px] mx-[13px] h-[66px] border border-[#dcdcdc] px-[7px] pb-[5px]">
      <legend class="leading-[18px] h-[18px] px-0">水平方向间距<span class="text-[10px] font-mono">(mm)=&gt;</span>间距<span class="text-[10px] font-mono">*</span>个数<span class="text-[10px] font-mono">,</span>间距<span class="text-[10px] font-mono">,</span>间距<span class="text-[10px] font-mono">*</span>个数<span class="text-[10px] font-mono">,</span>间距<span class="text-[10px] font-mono">,...</span></legend>
      <div class="h-[41px] w-[365px] bg-white border border-[#777] pl-[2px] pt-[1px] leading-[14px] text-[11px]"><span class="bg-[#0078d7] text-white border-r border-[#f08020] pr-[1px]">300*1</span></div>
    </fieldset>
    <fieldset class="mt-[7px] mx-[13px] h-[66px] border border-[#dcdcdc] px-[7px] pb-[5px]">
      <legend class="leading-[18px] h-[18px] px-0">垂直方向间距<span class="text-[10px] font-mono">(mm)=&gt;</span>间距<span class="text-[10px] font-mono">*</span>个数<span class="text-[10px] font-mono">,</span>间距<span class="text-[10px] font-mono">,</span>间距<span class="text-[10px] font-mono">*</span>个数<span class="text-[10px] font-mono">,</span>间距<span class="text-[10px] font-mono">,...</span></legend>
      <div class="h-[41px] w-[365px] bg-white border border-[#777] pl-[2px] pt-[1px] leading-[14px] text-[11px]">600*1</div>
    </fieldset>
    <div class="mt-[13px] flex justify-end pr-[14px] gap-[15px]">
      <div class="w-[72px] h-[23px] border border-[#adadad] bg-[#e1e1e1] flex items-center justify-center">确定</div>
      <div class="w-[72px] h-[23px] border border-[#adadad] bg-[#e1e1e1] flex items-center justify-center">取消</div>
    </div>
  </div>

  <!-- blue annotation boxes -->
  <div class="absolute left-[290px] top-[77px] w-[124px] h-[39px] border-[4px] border-[#0000ee]"></div>
  <div class="absolute left-[140px] top-[243px] w-[88px] h-[43px] border-[4px] border-[#0000ee]"></div>
</div>

<script>
  // tree rows for the module navigator
  const navTree = [
    ['f', '梁'], ['i-beam', '梁(L)'], ['i-ring', '圈梁(E)'],
    ['f', '板'], ['i-slab', '现浇板(B)'], ['i-spiral', '螺旋板(B)'], ['i-cap', '柱帽(V)'], ['i-hole', '板洞(N)'], ['i-cross', '板受力筋(S)'], ['i-cross', '板负筋(F)'], ['i-band', '楼层板带(H)'],
    ['f', '基础'], ['i-fbeam', '基础梁(F)'], ['i-raft', '筏板基础(M)'], ['i-pit', '集水坑(K)'], ['i-pier', '柱墩(Y)'], ['i-cross', '筏板主筋(R)'], ['i-cross', '筏板负筋(X)'], ['i-foot', '独立基础(P)'], ['i-strip', '条形基础(T)'], ['i-pilecap', '桩承台(V)'], ['i-fbeam', '承台梁(F)'], ['i-pile', '桩(U)'], ['i-band', '基础板带(W)'],
    ['c', '其它'],
    ['f', '自定义'], ['i-point', '自定义点'], ['i-line', '自定义线(X)'], ['i-face', '自定义面'], ['i-dim', '尺寸标注(W)']
  ];

  // ascii runs are narrower than the cjk font's, like the bitmap font in the app
  const small = s => s.replace(/[\x20-\x7e]+/g, m => `<span class="font-mono text-[10px]">${m}</span>`);

  document.getElementById('nav-tree').innerHTML = navTree.map(([icon, label]) => {
    if (icon === 'f' || icon === 'c') {
      const open = icon === 'f';
      return `<div class="h-4 flex items-center pl-[8px]">
        <svg class="w-3 h-3" viewBox="0 0 12 12"><use href="#${open ? 'i-down' : 'i-right'}"/></svg>
        <svg class="ml-[4px] w-4 h-[14px]" viewBox="0 0 16 14"><use href="#${open ? 'i-open' : 'i-closed'}"/></svg>
        <span class="ml-[5px] leading-4">${label}</span></div>`;
    }
    const selected = label.startsWith('自定义线');
    return `<div class="h-4 flex items-center pl-[43px] relative">
      <svg class="w-[15px] h-[15px] shrink-0" viewBox="0 0 16 16"><use href="#${icon}"/></svg>
      <span class="ml-[4px] leading-4 whitespace-nowrap ${selected ? 'bg-[#cfcfcf] pr-[1px]' : ''}">${small(label)}</span>
      ${selected ? '<svg class="ml-[2px] w-[12px] h-[12px] shrink-0" viewBox="0 0 12 12"><rect x=".5" y=".5" width="11" height="11" fill="#dbe9f8" stroke="#2a78c8"/><path d="M4 1v10M8 1v10" stroke="#2a78c8"/></svg>' : ''}
    </div>`;
  }).join('');

  document.getElementById('part-tree').innerHTML = `
    <div class="h-4 flex items-center pl-[7px]">
      <svg class="w-3 h-3" viewBox="0 0 12 12"><use href="#i-down"/></svg>
      <svg class="ml-[6px] w-[14px] h-[14px]" viewBox="0 0 16 16"><use href="#i-line"/></svg>
      <span class="ml-[5px] leading-4">自定义线</span>
    </div>` + [1, 2, 3, 4, 5].map(n => `
    <div class="h-4 flex items-center pl-[40px]">
      <div class="flex items-center h-4 pr-[5px] ${n === 5 ? 'bg-[#316ac5]' : ''}">
        <svg class="ml-[3px] w-[11px] h-[11px]" viewBox="0 0 16 16"><use href="#i-gear"/></svg>
        <span class="ml-[8px] font-mono text-[10px] leading-4 ${n === 5 ? 'text-[#101010]' : ''}">ZDYX-${n}</span>
      </div>
    </div>`).join('');
</script>
</body>
</html>
